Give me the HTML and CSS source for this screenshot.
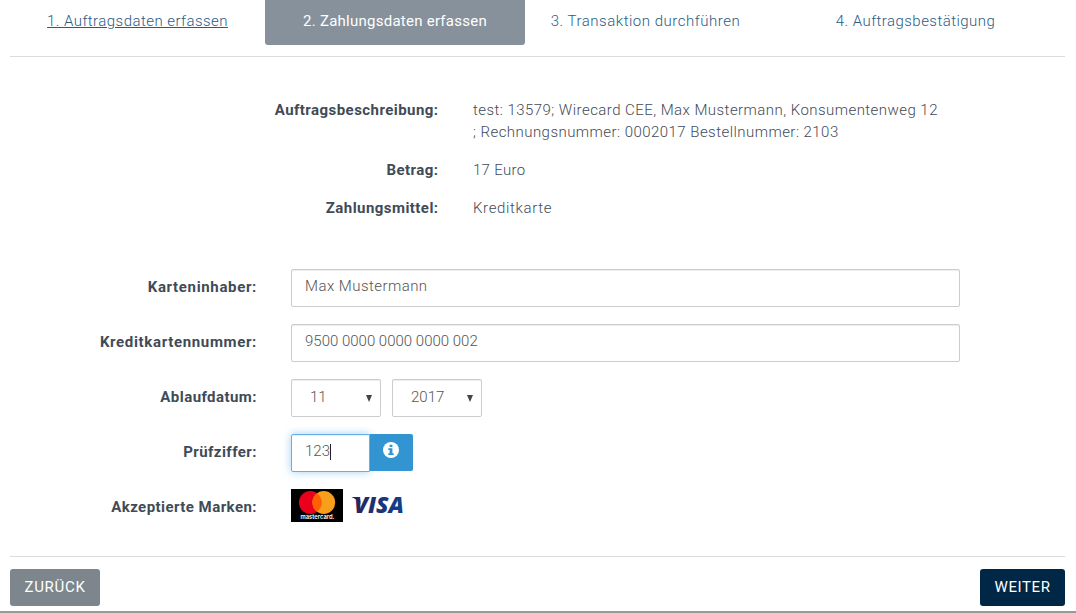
FILE: index.html
```html
<!DOCTYPE html>
<html lang="de">
<head>
<meta charset="utf-8">
<title>Zahlungsdaten erfassen</title>
<link rel="stylesheet" href="styles.css">
</head>
<body>
<main class="page">
  <nav class="steps">
    <a class="step step-done">1. Auftragsdaten erfassen</a>
    <a class="step step-active">2. Zahlungsdaten erfassen</a>
    <a class="step step-run">3. Transaktion durchführen</a>
    <a class="step">4. Auftragsbestätigung</a>
  </nav>
  <dl class="summary">
    <dt>Auftragsbeschreibung:</dt>
    <dd>test: 13579; Wirecard CEE, Max Mustermann, Konsumentenweg 12<br>; Rechnungsnummer: 0002017 Bestellnummer: 2103</dd>
    <dt>Betrag:</dt>
    <dd class="amount">17 Euro</dd>
    <dt>Zahlungsmittel:</dt>
    <dd class="method">Kreditkarte</dd>
  </dl>
  <form class="form">
    <div class="row">
      <span class="label spaced">Karteninhaber:</span>
      <div class="field wide">Max Mustermann</div>
    </div>
    <div class="row">
      <span class="label spaced">Kreditkartennummer:</span>
      <div class="field wide number">9500 0000 0000 0000 002</div>
    </div>
    <div class="row">
      <span class="label">Ablaufdatum:</span>
      <div class="field select"><span>11</span><svg class="arrow" viewBox="0 0 6 7"><path d="M0 0h6L3 7z"/></svg></div>
      <div class="field select year"><span>2017</span><svg class="arrow" viewBox="0 0 6 7"><path d="M0 0h6L3 7z"/></svg></div>
    </div>
    <div class="row">
      <span class="label">Prüfziffer:</span>
      <div class="field cvc">123<i class="caret"></i></div>
      <div class="info">
        <svg width="16" height="16" viewBox="0 0 16 16"><circle cx="8" cy="8" r="8" fill="#fff"/><path d="M6.6 2.7h2.8v2.2H6.6zM5.3 6.3h4.1v4.9h1.3v1.8H5.3v-1.8h1.3V8H5.3z" fill="#3394d2"/></svg>
      </div>
    </div>
    <div class="row">
      <span class="label">Akzeptierte Marken:</span>
      <div class="brands">
        <svg width="52" height="33" viewBox="0 0 52 33">
          <path d="M0 0h52v33H0z" fill="#000"/>
          <circle cx="19.3" cy="13.5" r="11.4" fill="#eb001b"/>
          <circle cx="32.8" cy="13.5" r="11.4" fill="#f79e1b"/>
          <path d="M26.05 4.3a11.4 11.4 0 0 1 0 18.4a11.4 11.4 0 0 1 0-18.4z" fill="#ff5f00"/>
          <text class="mc-text" x="9.5" y="30.3" textLength="34" lengthAdjust="spacingAndGlyphs">mastercard.</text>
        </svg>
        <svg class="visa" width="54" height="33" viewBox="0 0 54 33">
          <defs><linearGradient id="blue"><stop offset="0" stop-color="#25265f"/><stop offset="1" stop-color="#10418f"/></linearGradient></defs>
          <text class="visa-text" x="3" y="24.4" textLength="50" lengthAdjust="spacingAndGlyphs" fill="url(#blue)">VISA</text>
          <path d="M.3 8h7l2 2.500L9.500 15Q6 10 .3 8z" fill="#25265f"/>
        </svg>
      </div>
    </div>
  </form>
  <footer class="actions">
    <button class="btn back">ZURÜCK</button>
    <button class="btn next">WEITER</button>
  </footer>
</main>
</body>
</html>
```
FILE: styles.css
```css
* { box-sizing: border-box; }
body {
  margin: 0;
  height: 613px;
  overflow: hidden;
  border-bottom: 2px solid #999;
  background: #fff;
  color: #3f4b57;
  font: 300 15px/22px Roboto, "Open Sans", sans-serif;
  letter-spacing: 0.45px;
}
.page { padding: 0 11px 0 10px; }
.steps {
  display: grid;
  grid-template-columns: 255px 260px 241px 299px;
  height: 57px;
  border-bottom: 1px solid #dcdcdc;
}
.step {
  height: 45px;
  padding-top: 10px;
  text-align: center;
  white-space: nowrap;
  color: #2b5b84;
}
.step-done { text-decoration: underline; }
.step-active {
  background: #86919c;
  color: #fff;
  border-radius: 0 0 3px 3px;
  font-weight: 400;
  letter-spacing: 0.25px;
}
.step-run { letter-spacing: 0.52px; }
.summary {
  display: grid;
  grid-template-columns: 428.500px 1fr;
  column-gap: 34.500px;
  row-gap: 16px;
  margin: 42px 0 0;
}
.summary dt { text-align: right; font-weight: 700; }
.summary dd { margin: 0; white-space: nowrap; }
.summary .amount { letter-spacing: 0.3px; }
.summary .method { letter-spacing: 0.65px; }
.form { display: grid; gap: 17px; margin-top: 50px; }
.row { display: flex; height: 38px; }
.label {
  width: 247px;
  margin-right: 34px;
  padding-top: 7px;
  text-align: right;
  font-weight: 700;
}
.spaced { letter-spacing: 0.66px; }
.field {
  height: 38px;
  padding: 5px 13px;
  border: 1px solid #ccc;
  border-radius: 2px;
  color: #555;
  box-shadow: inset 0 1px 1px rgba(0, 0, 0, .075);
}
.wide { width: 669px; }
.number { letter-spacing: 0; }
.select {
  display: flex;
  justify-content: space-between;
  width: 90px;
  margin-right: 11px;
  padding: 6px 8px 0 18px;
  letter-spacing: 0;
}
.arrow { width: 6px; height: 7px; margin-top: 9px; fill: #444; }
.cvc {
  width: 79px;
  display: flex;
  border-color: #66afe9;
  border-radius: 2px 0 0 2px;
  letter-spacing: 0;
  box-shadow: inset 0 1px 1px rgba(0, 0, 0, .075), 0 0 8px rgba(102, 175, 233, .6);
}
.caret { width: 1px; height: 16px; margin-top: 4px; background: #222; }
.info {
  width: 43px;
  height: 37px;
  padding: 8px 0 0 13px;
  background: #3394d2;
  border-radius: 0 2px 2px 0;
  line-height: 0;
}
.brands { display: flex; gap: 8px; }
.mc-text { font: 600 6px Inter, sans-serif; fill: #fff; letter-spacing: 0; }
.visa-text { font: italic 800 22px "Open Sans", sans-serif; letter-spacing: 0; }
.actions {
  display: flex;
  justify-content: space-between;
  margin-top: 29px;
  padding-top: 12px;
  border-top: 1px solid #dcdcdc;
}
.btn {
  height: 37px;
  padding: 0 0 2px;
  border: 0;
  border-radius: 3px;
  color: #fff;
  font: 400 15px/22px Roboto, sans-serif;
}
.back { width: 90px; background: #7c868c; letter-spacing: 0.7px; }
.next { width: 85px; background: #002745; letter-spacing: 0.6px; }
```
